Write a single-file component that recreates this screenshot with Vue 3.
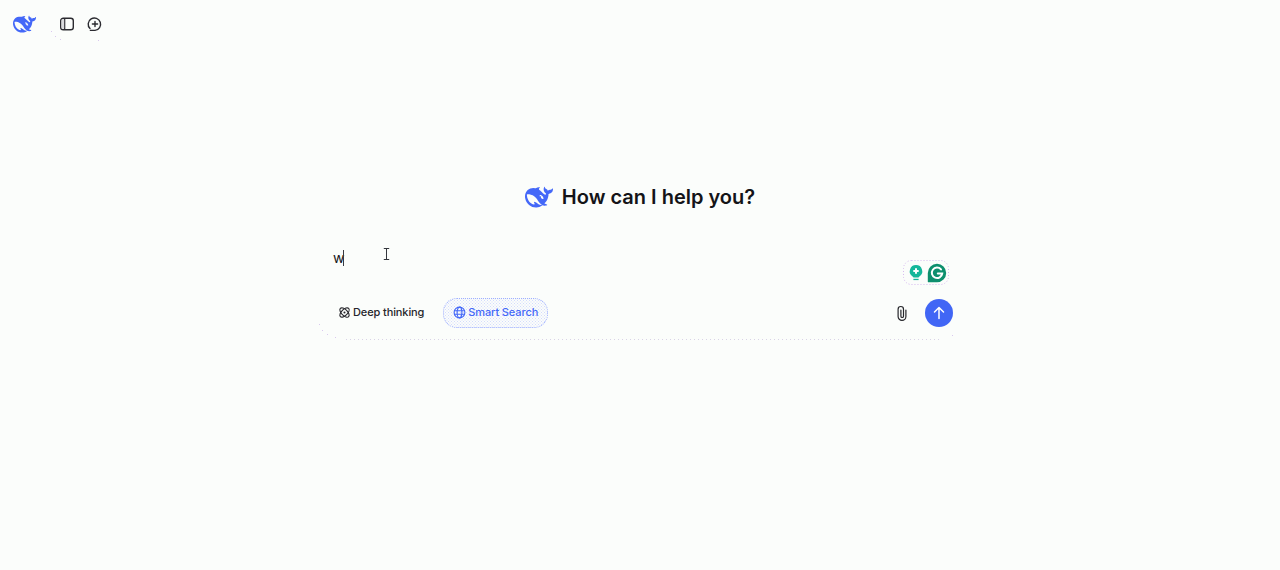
<template>
  <div class="page">
    <header class="topbar">
      <svg class="logo-small" viewBox="0 2.4 24 18.6" aria-label="DeepSeek"><path fill="#4468f8" :d="whalePath" /></svg>
      <div class="top-actions">
        <button class="icon-btn" aria-label="Toggle sidebar">
          <svg width="16" height="16" viewBox="0 0 16 16" fill="none" stroke="#2b2b30" stroke-width="1.4">
            <rect x="1.7" y="2.2" width="12.6" height="11.6" rx="2.6" />
            <path d="M5.6 2.4v11.2" />
            <path d="M2.6 3.5h2.6v9H2.6z" fill="#d9dadd" stroke="none" />
          </svg>
        </button>
        <button class="icon-btn" aria-label="New chat">
          <svg width="16" height="16" viewBox="0 0 16 16" fill="none" stroke="#2b2b30" stroke-width="1.4" stroke-linecap="round">
            <path d="M3 12.6A6.2 6.2 0 1 1 8 14.4H3.4" />
            <path d="M8 5.4v5.2M5.4 8h5.2" />
          </svg>
        </button>
      </div>
      <i v-for="d in strayDots" :key="d.x" class="stray" :style="{ left: d.x + 'px', top: d.y + 'px' }"></i>
    </header>

    <main class="center">
      <h1 class="title">
        <svg class="logo-big" viewBox="0 2.4 24 18.6"><path fill="#4468f8" :d="whalePath" /></svg>
        <span>How can I help you?</span>
      </h1>

      <section class="composer">
        <div class="input-row">
          <span class="typed">w</span><span class="caret"></span>
          <svg class="ibeam" width="7" height="12" viewBox="0 0 7 12" fill="none" stroke="#33363c">
            <path d="M.8.5h5.400M3.500.5v11M.8 11.500h5.400" />
          </svg>
          <div class="grammarly">
            <svg class="grammarly-outline" width="46" height="25" viewBox="0 0 46 25" fill="none" stroke="#d5b8ef" stroke-dasharray="1 2">
              <rect x=".5" y=".5" width="45" height="24" rx="8" />
            </svg>
            <svg width="16" height="18" viewBox="0 0 16 18">
              <path fill="#15b79a" d="M8 1a6.200 6.200 0 0 0-3.400 11.400c.5.300.8.700.8 1.100h5.200c0-.4.300-.8.800-1.100A6.200 6.200 0 0 0 8 1Z" />
              <path fill="#15b79a" d="M5.400 14.800h5.200v1.300H5.400z" />
              <path stroke="#fff" stroke-width="2" d="M8 4.300v5.400M5.300 7h5.400" />
            </svg>
            <svg width="20" height="20" viewBox="0 0 20 20">
              <path fill="#0e8f6e" d="M10 .8a9.200 9.200 0 0 1 0 18.400H1.200a.4.400 0 0 1-.4-.4V10A9.200 9.200 0 0 1 10 .8Z" />
              <path fill="none" stroke="#fff" stroke-width="2" stroke-linecap="round" d="M14 6.400a5.200 5.200 0 1 0 1.200 4.100h-4.400" />
            </svg>
          </div>
        </div>

        <div class="tool-row">
          <button class="tool">
            <svg width="13" height="13" viewBox="0 0 14 14" fill="none" stroke="#26262b" stroke-width="1.200">
              <ellipse cx="7" cy="7" rx="6.300" ry="3.200" transform="rotate(45 7 7)" />
              <ellipse cx="7" cy="7" rx="6.300" ry="3.200" transform="rotate(-45 7 7)" />
              <circle cx="7" cy="7" r="1.100" fill="#26262b" stroke="none" />
            </svg>
            Deep thinking
          </button>
          <button class="tool tool-on">
            <svg width="13" height="13" viewBox="0 0 14 14" fill="none" stroke="#4468f8" stroke-width="1.200">
              <circle cx="7" cy="7" r="5.800" />
              <ellipse cx="7" cy="7" rx="2.600" ry="5.800" />
              <path d="M1.400 5.100h11.200M1.400 8.900h11.200" />
            </svg>
            Smart Search
          </button>
          <div class="spacer"></div>
          <button class="attach" aria-label="Attach file">
            <svg width="14" height="16" viewBox="0 0 14 16" fill="none" stroke="#26262b" stroke-width="1.200" stroke-linecap="round">
              <path d="M10.900 5v6.500a3.900 3.900 0 0 1-7.800 0V4.200a2.700 2.700 0 0 1 5.400 0v7a1.300 1.300 0 0 1-2.600 0V5" />
            </svg>
          </button>
          <button class="send" aria-label="Send">
            <svg width="14" height="14" viewBox="0 0 14 14" fill="none" stroke="#fff" stroke-width="1.500" stroke-linecap="round" stroke-linejoin="round">
              <path d="M7 12.500v-11M2.500 6 7 1.500 11.500 6" />
            </svg>
          </button>
        </div>
        <i v-for="d in cornerDots" :key="d.x" class="stray" :style="{ left: d.x + 'px', top: d.y + 'px' }"></i>
      </section>
    </main>
  </div>
</template>

<script setup>
const whalePath =
  "M23.748 4.482c-.254-.124-.364.113-.512.234-.051.039-.094.09-.137.136-.372.397-.806.657-1.373.626-.829-.046-1.537.214-2.163.848-.133-.782-.575-1.248-1.247-1.548-.352-.156-.708-.311-.955-.65-.172-.241-.219-.51-.305-.774-.055-.16-.11-.323-.293-.35-.2-.031-.278.136-.356.276-.313.572-.434 1.202-.422 1.84.027 1.436.633 2.58 1.838 3.393.137.093.172.187.129.323-.082.28-.18.552-.266.833-.055.179-.137.217-.329.14a5.526 5.526 0 01-1.736-1.18c-.857-.828-1.631-1.742-2.597-2.458a11.365 11.365 0 00-.689-.471c-.985-.957.13-1.743.388-1.836.27-.098.093-.432-.779-.428-.872.004-1.67.295-2.687.684a3.055 3.055 0 01-.465.137 9.597 9.597 0 00-2.883-.102c-1.885.21-3.39 1.102-4.497 2.623C.082 8.606-.231 10.684.152 12.85c.403 2.284 1.569 4.175 3.36 5.653 1.858 1.533 3.997 2.284 6.438 2.14 1.482-.085 3.133-.284 4.994-1.86.47.234.962.327 1.78.397.63.059 1.236-.03 1.705-.128.735-.156.684-.837.419-.961-2.155-1.004-1.682-.595-2.113-.926 1.096-1.296 2.746-2.642 3.392-7.003.05-.347.007-.565 0-.845-.004-.17.035-.237.23-.256a4.173 4.173 0 001.545-.475c1.396-.763 1.96-2.015 2.093-3.517.02-.23-.004-.467-.247-.588zM11.581 18c-2.089-1.642-3.102-2.183-3.52-2.16-.392.024-.321.471-.235.763.09.288.207.486.371.739.114.167.192.416-.113.603-.673.416-1.842-.14-1.897-.167-1.361-.802-2.5-1.86-3.301-3.307-.774-1.393-1.224-2.887-1.298-4.482-.02-.386.093-.522.477-.592a4.696 4.696 0 011.529-.039c2.132.312 3.946 1.265 5.468 2.774.868.86 1.525 1.887 2.202 2.891.72 1.066 1.494 2.082 2.48 2.914.348.292.625.514.891.677-.802.09-2.14.11-3.054-.614zm1-6.44a.306.306 0 01.415-.287.302.302 0 01.2.288.306.306 0 01-.31.307.303.303 0 01-.304-.308zm3.11 1.596c-.2.081-.399.151-.59.16a1.245 1.245 0 01-.798-.254c-.274-.23-.47-.358-.552-.758a1.73 1.73 0 01.016-.588c.07-.327-.008-.537-.239-.727-.187-.156-.426-.199-.688-.199a.559.559 0 01-.254-.078c-.11-.054-.2-.19-.114-.358.028-.054.16-.186.192-.21.356-.202.767-.136 1.146.016.352.144.618.408 1.001.782.391.451.462.576.685.914.176.265.336.537.445.848.067.195-.019.354-.25.452z";

// leftover dither specks of the GIF capture
const strayDots = [
  { x: 51, y: 31 },
  { x: 55, y: 36 },
  { x: 60, y: 39 },
  { x: 98, y: 40 },
];

// relative to the composer box
const cornerDots = [
  { x: 1, y: 88 },
  { x: 4, y: 94 },
  { x: 9, y: 98 },
  { x: 17, y: 101 },
  { x: 634, y: 99 },
];
</script>

<style>
html,
body {
  margin: 0;
  background: #fbfdfb;
}
</style>

<style scoped>
.page {
  height: 570px;
  overflow: hidden;
  background: #fbfdfb;
  color: #141418;
  font-family: Inter, "Liberation Sans", sans-serif;
}

.topbar {
  position: relative;
  display: flex;
  align-items: center;
  height: 48px;
  padding-left: 13px;
}

.stray {
  position: absolute;
  width: 1px;
  height: 1px;
  background: #d9c8ee;
}

.logo-small {
  width: 23px;
  height: 18px;
}

.top-actions {
  display: flex;
  gap: 12px;
  margin-left: 23px;
}

.icon-btn {
  display: flex;
  padding: 0;
  border: 0;
  background: none;
}

.center {
  display: flex;
  flex-direction: column;
  align-items: center;
  padding-top: 134px;
}

.title {
  display: flex;
  align-items: center;
  gap: 9px;
  height: 30px;
  margin: 0;
  font-size: 20px;
  font-weight: 600;
  line-height: 30px;
}

.logo-big {
  width: 28px;
  height: 22px;
}

.composer {
  position: relative;
  display: flex;
  flex-direction: column;
  box-sizing: border-box;
  width: 638px;
  height: 104px;
  margin: 24px 6px 0 0;
  padding: 0 3px 0 15px;
  background-image: repeating-linear-gradient(to right, #d9d3e6 0 1px, transparent 1px 4px);
  background-position: 28px 100%;
  background-size: 596px 1px;
  background-repeat: no-repeat;
}

.input-row {
  position: relative;
  display: flex;
  align-items: flex-start;
  box-sizing: border-box;
  height: 50px;
  padding-top: 12px;
  font-size: 14px;
  line-height: 20px;
}

.caret {
  width: 1px;
  height: 16px;
  margin: 2px 0 0 -1px;
  background: #3a3a40;
}

.ibeam {
  position: absolute;
  top: 12px;
  left: 50px;
}

.grammarly {
  position: absolute;
  top: 24px;
  right: 4px;
  display: flex;
  align-items: center;
  justify-content: flex-end;
  gap: 3px;
  box-sizing: border-box;
  width: 46px;
  height: 25px;
  padding-right: 2px;
}

.grammarly-outline {
  position: absolute;
  top: 0;
  left: 0;
}

.tool-row {
  display: flex;
  align-items: center;
  gap: 10px;
  height: 28px;
  margin-top: 13px;
}

.tool {
  display: flex;
  align-items: center;
  gap: 2px;
  box-sizing: border-box;
  height: 28px;
  padding: 0 9px 2px 5px;
  border: 0;
  border-radius: 14px;
  background: none;
  color: #26262b;
  font-family: inherit;
  font-size: 11px;
  font-weight: 500;
  letter-spacing: -0.01em;
}

.tool-on {
  height: 30px;
  padding: 0 9px 2px;
  border: 1px dotted #9fb0ff;
  color: #4468f8;
  background-image:
    radial-gradient(circle, #d3dbfd 0.6px, transparent 0.7px),
    radial-gradient(circle, #d3dbfd 0.6px, transparent 0.7px);
  background-position: 0 0, 1.5px 1.5px;
  background-size: 3px 3px;
}

.spacer {
  flex: 1;
}

.attach {
  display: flex;
  margin-right: 6px;
  padding: 0;
  border: 0;
  background: none;
}

.send {
  display: flex;
  align-items: center;
  justify-content: center;
  width: 28px;
  height: 28px;
  padding: 0;
  border: 0;
  border-radius: 50%;
  background: #4166f5;
}
</style>
